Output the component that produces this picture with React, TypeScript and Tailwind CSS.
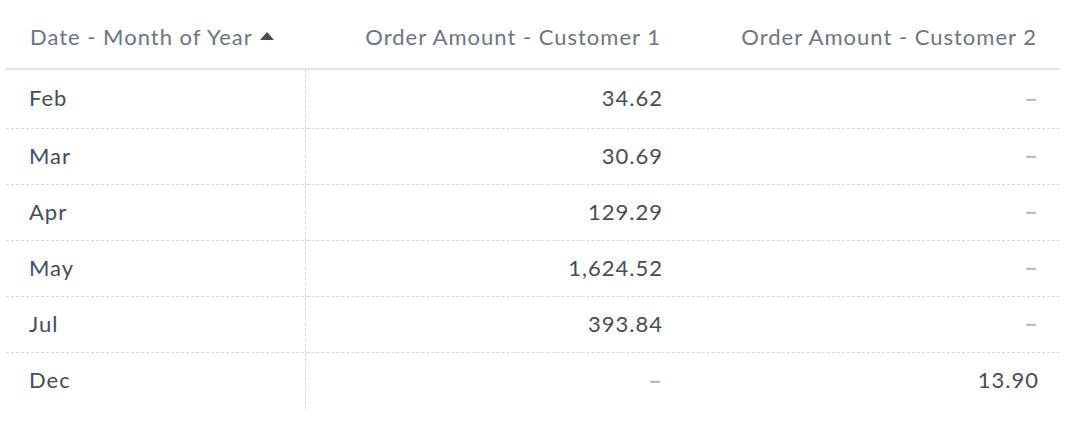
const rows = [
  { month: "Feb", c1: "34.62", c2: null },
  { month: "Mar", c1: "30.69", c2: null },
  { month: "Apr", c1: "129.29", c2: null },
  { month: "May", c1: "1,624.52", c2: null },
  { month: "Jul", c1: "393.84", c2: null },
  { month: "Dec", c1: null, c2: "13.90" },
];

function Cell({ value }: { value: string | null }) {
  if (value === null) {
    // empty value marker
    return (
      <span className="mr-[1px] text-[24px] font-bold tracking-normal text-[#b0becb]">–</span>
    );
  }
  return <span>{value}</span>;
}

export default function App() {
  return (
    <div
      className="h-[424px] w-[1088px] bg-white pl-[6px] text-[22px] tracking-[1px]"
      style={{ fontFamily: "Lato, 'Open Sans', sans-serif" }}
    >
      <div className="w-[1054px]">
        {/* Header */}
        <div className="grid h-[70px] grid-cols-[300px_378px_376px] items-center border-b-2 border-[#dde4eb] pt-[5px] text-[#6d7680]">
          <div className="flex items-center gap-[7px] pl-[24px]">
            <span>Date - Month of Year</span>
            <svg width="14" height="8" viewBox="0 0 14 8" className="mb-[2px]">
              <path d="M7 0 L14 8 L0 8 Z" fill="#464e56" />
            </svg>
          </div>
          <div className="pr-[23px] text-right">Order Amount - Customer 1</div>
          <div className="pr-[23px] text-right">Order Amount - Customer 2</div>
        </div>

        {/* Body */}
        {rows.map((row, i) => (
          <div
            key={row.month}
            className={`grid grid-cols-[300px_378px_376px] text-[#464e56] ${
              i === 0 ? "h-[59px]" : "h-[56px]"
            } ${i < rows.length - 1 ? "border-b border-dashed border-[#d3d9df]" : ""}`}
          >
            <div className="flex items-center border-r border-dashed border-[#d3d9df] pb-[3px] pl-[23px]">
              {row.month}
            </div>
            <div className="flex items-center justify-end pb-[3px] pr-[21px]">
              <Cell value={row.c1} />
            </div>
            <div className="flex items-center justify-end pb-[3px] pr-[21px]">
              <Cell value={row.c2} />
            </div>
          </div>
        ))}
      </div>
    </div>
  );
}
